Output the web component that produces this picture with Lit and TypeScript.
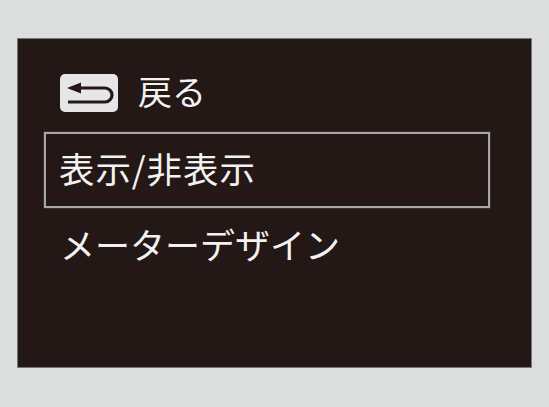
import { LitElement, html, css } from "lit";
import { customElement } from "lit/decorators.js";

@customElement("app-root")
export class AppRoot extends LitElement {
  static styles = css`
    :host {
      display: block;
      width: 549px;
      height: 407px;
      background: #dcdedd;
      font-family: "Noto Sans CJK JP", "Noto Sans", sans-serif;
      overflow: hidden;
    }
    .page {
      padding: 38px 17px 39px 17px;
      box-sizing: border-box;
      height: 100%;
    }
    .screen {
      box-sizing: border-box;
      height: 100%;
      width: 515px;
      background: #231815;
      border: 1px solid #77787a;
      padding: 35px 41px 0 26px;
      color: #f2f2f2;
      display: flex;
      flex-direction: column;
      font-size: 35px;
      line-height: 40px;
    }
    .back {
      display: flex;
      align-items: center;
      gap: 20px;
      height: 38px;
      padding-left: 16px;
      margin-bottom: 20px;
    }
    .back span {
      display: block;
      font-size: 34px;
      padding-bottom: 4px;
    }
    .key {
      display: block;
      width: 58px;
      height: 38px;
      flex: none;
    }
    .row {
      display: flex;
      align-items: center;
      box-sizing: border-box;
      height: 76px;
      padding: 0 14px 4px;
      white-space: nowrap;
    }
    .row.sel {
      border: 2px solid #a6a8a8;
      box-shadow: 0 0 1px #a6a8a8;
      font-size: 35.500px;
      letter-spacing: 0.900px;
      padding-left: 13px;
    }
    .row.plain {
      padding-left: 16px;
    }
  `;

  render() {
    return html`
      <div class="page">
        <div class="screen">
          <div class="back">
            <svg class="key" viewBox="0 0 58 38">
              <rect width="58" height="38" rx="5" fill="#e6e6e6" />
              <path d="M18 14H45A7 7 0 0 1 45 28H8" stroke="#231815" stroke-width="3.200" fill="none" />
              <path d="M7 14L21 8.500V19.500Z" fill="#231815" />
            </svg>
            <span>戻る</span>
          </div>
          <div class="row sel">表示/非表示</div>
          <div class="row plain">メーターデザイン</div>
        </div>
      </div>
    `;
  }
}
